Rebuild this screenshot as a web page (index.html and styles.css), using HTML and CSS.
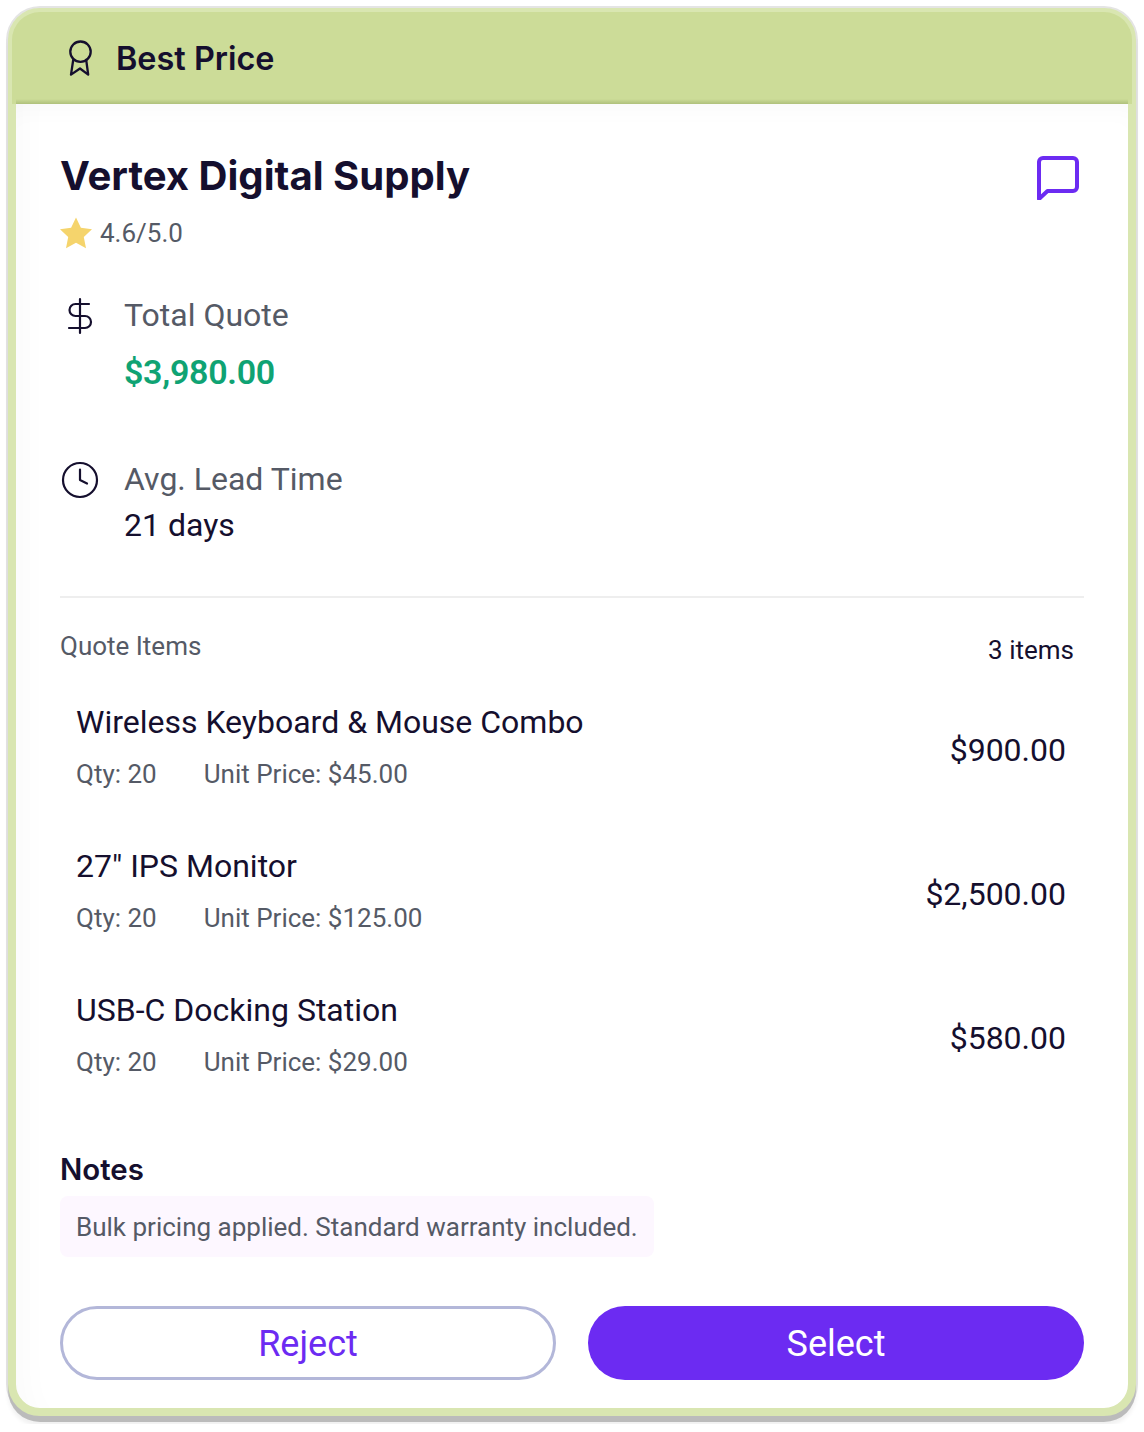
FILE: index.html
```html
<!DOCTYPE html>
<html lang="en">
<head>
<meta charset="utf-8">
<title>Best Price Quote</title>
<link rel="stylesheet" href="styles.css">
</head>
<body>
<main class="card">
  <header class="banner">
    <svg class="icon-award" viewBox="0 0 24 36" width="24" height="36" fill="none" stroke="#150f2e" stroke-width="2.3" stroke-linejoin="round" stroke-linecap="round"><circle cx="12.500" cy="11.700" r="10.200"/><path d="M5.200 20 3 34.600l9-6.100 8.200 6.100L18.200 20"/></svg>
    <span class="banner-title">Best Price</span>
  </header>
  <section class="content">
    <div class="title-row">
      <div>
        <h1 class="vendor">Vertex Digital Supply</h1>
        <div class="rating">
          <svg class="star" viewBox="0 0 32 32" width="32" height="32"><path fill="#f5d46c" d="M16 0.500l4.900 10.300 11.100 1.400-8.200 7.800 2.200 11.300L16 25.800 6 31.300l2.200-11.300L0 12.200l11.100-1.400z"/></svg>
          <span>4.6/5.0</span>
        </div>
      </div>
      <svg class="chat" viewBox="0 0 44 44" width="44" height="44" fill="none" stroke="#6c2bf2" stroke-width="4" stroke-linejoin="round" stroke-linecap="round"><path d="M7 2h30a4 4 0 0 1 4 4v25a4 4 0 0 1-4 4H11.500L3 43V6a4 4 0 0 1 4-4z"/></svg>
    </div>

    <div class="metric metric-price">
      <svg class="metric-icon" viewBox="0 0 40 40" width="40" height="40" fill="none" stroke="#150f2e" stroke-width="2.200" stroke-linecap="round"><path d="M20 3v34M29 8H15.500a6 6 0 0 0 0 12h9.500a6 6 0 0 1 0 12H9"/></svg>
      <div>
        <div class="metric-label">Total Quote</div>
        <div class="price">$3,980.00</div>
      </div>
    </div>

    <div class="metric metric-lead">
      <svg class="metric-icon" viewBox="0 0 40 40" width="40" height="40" fill="none" stroke="#150f2e" stroke-width="2.200" stroke-linecap="round" stroke-linejoin="round"><circle cx="20" cy="20" r="17"/><path d="M20 9.500V20l7 3.500"/></svg>
      <div>
        <div class="metric-label">Avg. Lead Time</div>
        <div class="metric-value">21 days</div>
      </div>
    </div>

    <div class="items-head">
      <span class="items-label">Quote Items</span>
      <span class="items-count">3 items</span>
    </div>

    <ul class="items">
      <li class="item">
        <div>
          <div class="item-name">Wireless Keyboard &amp; Mouse Combo</div>
          <div class="item-meta"><span>Qty: 20</span><span>Unit Price: $45.00</span></div>
        </div>
        <div class="item-total">$900.00</div>
      </li>
      <li class="item">
        <div>
          <div class="item-name">27" IPS Monitor</div>
          <div class="item-meta"><span>Qty: 20</span><span>Unit Price: $125.00</span></div>
        </div>
        <div class="item-total">$2,500.00</div>
      </li>
      <li class="item">
        <div>
          <div class="item-name">USB-C Docking Station</div>
          <div class="item-meta"><span>Qty: 20</span><span>Unit Price: $29.00</span></div>
        </div>
        <div class="item-total">$580.00</div>
      </li>
    </ul>

    <h2 class="notes-title">Notes</h2>
    <p class="notes">Bulk pricing applied. Standard warranty included.</p>

    <div class="actions">
      <button class="btn btn-reject" type="button">Reject</button>
      <button class="btn btn-select" type="button">Select</button>
    </div>
  </section>
</main>
</body>
</html>
```
FILE: styles.css
```css
* { box-sizing: border-box; }
html, body { margin: 0; padding: 0; background: #fff; }
body { padding: 8px; font-family: Roboto, "Liberation Sans", sans-serif; color: #150f2e; }
.card {
  width: 1128px;
  height: 1408px;
  border: 8px solid #d9e6b1;
  border-radius: 32px;
  background: #fff;
  box-shadow: 0 6px 0 #bbbbbb, 0 10px 4px rgba(0,0,0,.06), 0 0 0 2px #e4e4e4;
  display: flex;
  flex-direction: column;
}
.banner {
  position: relative;
  flex: none;
  height: 92px;
  margin: -4px -4px 0;
  padding-left: 48px;
  border-radius: 28px 28px 0 0;
  background: #ccdc98;
  display: flex;
  align-items: center;
  gap: 24px;
}
.banner::after {
  content: "";
  position: absolute;
  left: 4px;
  right: 4px;
  bottom: 0;
  height: 5px;
  background: linear-gradient(rgba(120,140,70,0), rgba(120,140,70,.35));
}
.icon-award { margin-left: 8px; flex: none; }
.banner-title { margin-top: 1px; font-family: Inter, sans-serif; font-size: 32.400px; font-weight: 600; line-height: 40px; }
.content {
  flex: 1;
  padding: 44px 44px 28px;
  border-radius: 0 0 24px 24px;
  display: flex;
  flex-direction: column;
  box-shadow: inset 0 20px 30px -20px rgba(0,0,0,.035), inset 40px 0 40px -40px rgba(0,0,0,.03);
}
.title-row { display: flex; justify-content: space-between; align-items: flex-start; }
.vendor { margin: 0; font-family: Inter, sans-serif; font-size: 40.100px; line-height: 56px; font-weight: 700; }
.rating { display: flex; align-items: center; gap: 8px; margin-top: 11px; font-size: 26px; line-height: 36px; color: #555a66; }
.chat { margin: 8px 4px 0 0; }
.metric { display: flex; gap: 24px; }
.metric-icon { flex: none; margin-top: 3px; }
.metric-price { margin-top: 42px; height: 164px; }
.metric-label { font-size: 32px; line-height: 44px; color: #555a66; }
.price { margin-top: 7px; font-size: 34px; line-height: 56px; font-weight: 600; letter-spacing: -0.3px; color: #0fa373; }
.metric-value { font-size: 32px; line-height: 48px; }
.metric-lead { height: 141px; border-bottom: 2px solid #eeeeee; }
.items-head { display: flex; justify-content: space-between; padding: 28px 10px 0 0; }
.items-label { font-size: 26px; line-height: 40px; color: #555a66; }
.items-count { font-size: 26px; line-height: 40px; margin-top: 4px; }
.items { list-style: none; margin: -8px 0 0; padding: 0; }
.item { height: 144px; padding: 24px 18px 0 16px; display: flex; justify-content: space-between; align-items: center; }
.item-name { font-size: 32px; line-height: 48px; }
.item-meta { display: flex; gap: 47px; font-size: 26px; line-height: 40px; color: #555a66; margin-top: 8px; }
.item-total { font-size: 32px; line-height: 48px; padding-top: 8px; }
.notes-title { margin: 56px 0 0; font-family: Inter, sans-serif; font-size: 29.400px; line-height: 40px; font-weight: 600; }
.notes { margin: 6px 0 0; align-self: flex-start; background: #fdf7ff; border-radius: 8px; padding: 13px 16px 12px; font-size: 26px; line-height: 36px; color: #555a66; }
.actions { display: grid; grid-template-columns: 1fr 1fr; gap: 32px; margin-top: auto; }
.btn { height: 74px; padding: 2px 0 0; border-radius: 37px; font-family: Roboto, sans-serif; font-size: 36px; border: 3px solid transparent; }
.btn-reject { background: #fff; border-color: #b3b7d9; color: #6c2bf2; }
.btn-select { background: #6c2bf2; color: #fff; }
```
